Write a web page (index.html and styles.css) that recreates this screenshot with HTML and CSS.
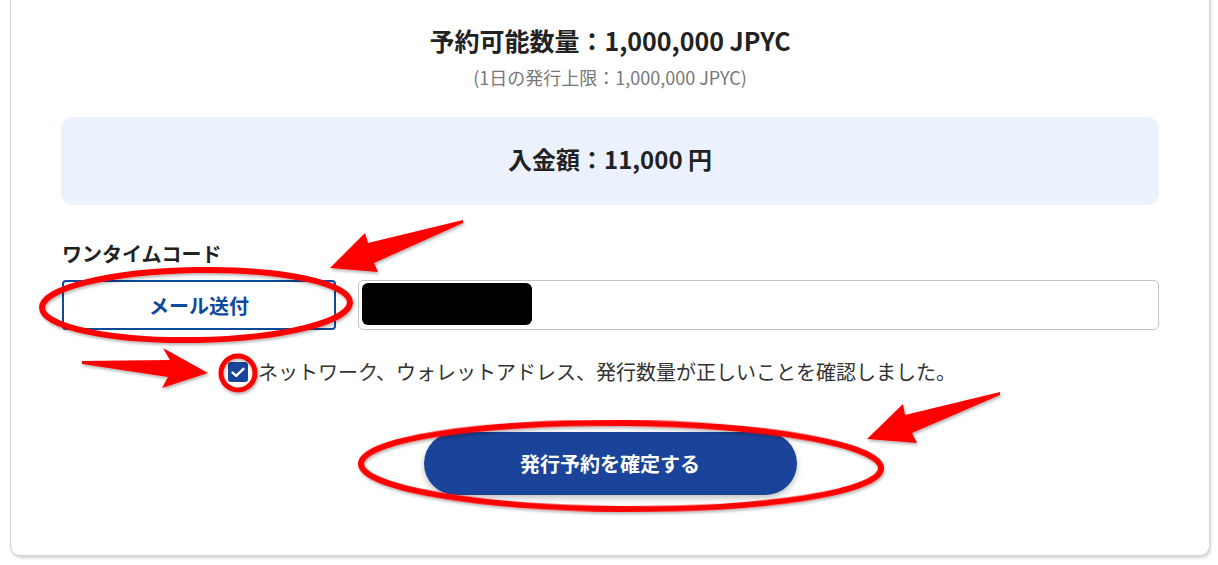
FILE: index.html
```html
<!DOCTYPE html>
<html lang="ja">
<head>
    <meta charset="UTF-8">
    <meta name="viewport" content="width=device-width, initial-scale=1.0">
    <title>発行予約</title>
    <link rel="stylesheet" href="styles.css">
</head>
<body>
    <div class="card">
        <h2 class="limit">予約可能数量：1,000,000 JPYC</h2>
        <p class="limit-note">(1日の発行上限：1,000,000 JPYC)</p>

        <div class="deposit">入金額：11,000 円</div>

        <form id="reserveForm">
            <label class="field-label" for="otp">ワンタイムコード</label>
            <div class="otp-row">
                <button type="button" class="send-btn">メール送付</button>
                <div class="otp-field">
                    <input type="text" id="otp" name="otp">
                    <span class="redact"></span>
                </div>
            </div>

            <label class="confirm">
                <span class="check">
                    <svg width="14" height="11" viewBox="0 0 14 11"><path d="M1.6 5.6 L5.2 8.9 L12.4 1.8" fill="none" stroke="#fff" stroke-width="2.4" stroke-linecap="round" stroke-linejoin="round"/></svg>
                </span>
                ネットワーク、ウォレットアドレス、発行数量が正しいことを確認しました。
            </label>

            <div class="submit-wrap">
                <button type="submit" class="submit-btn">発行予約を確定する</button>
            </div>
        </form>
    </div>

    <!-- red annotations drawn on top of the screenshot -->
    <svg class="marks" width="1218" height="565" viewBox="0 0 1218 565">
        <defs>
            <filter id="shade" x="-10%" y="-10%" width="130%" height="140%">
                <feDropShadow dx="1" dy="2" stdDeviation="1.5" flood-color="#000" flood-opacity="0.3"/>
            </filter>
        </defs>
        <g fill="#ff0000" filter="url(#shade)">
            <polygon points="463,220 368,243 365,233 330,268 378,272 374,263 463,223"/>
            <polygon points="82,361 170,360 163,348 208,373 162,388 168,377 82,364"/>
            <polygon points="1000,392 905,415 903,404 867,439 917,443 912,433 1000,395"/>
        </g>
        <g fill="none" stroke="#ff0000" filter="url(#shade)">
            <ellipse cx="196" cy="305" rx="154" ry="35" stroke-width="6" transform="rotate(-1 196 305)"/>
            <circle cx="238" cy="373" r="17" stroke-width="5"/>
            <ellipse cx="621" cy="466" rx="260" ry="43" stroke-width="6" transform="rotate(0.5 621 466)"/>
        </g>
    </svg>
</body>
</html>
```

FILE: styles.css
```css
body {
    font-family: "Noto Sans CJK JP", "Noto Sans", sans-serif;
    margin: 0;
    padding: 0 8px 0 10px;
    background: #fff;
    color: #222;
    position: relative;
    height: 565px;
    overflow: hidden;
}

.card {
    width: 1200px;
    box-sizing: border-box;
    margin-top: -20px;
    padding: 41px 50px 0 50px;
    height: 576px;
    border: 1px solid #d6d6d6;
    border-radius: 10px;
    box-shadow: 1px 2px 3px rgba(0, 0, 0, 0.18);
    background: #fff;
}

.limit {
    margin: 0;
    text-align: center;
    font-size: 25px;
    line-height: 36px;
    font-weight: 700;
    color: #222;
}

.limit-note {
    margin: 7px 0 0;
    text-align: center;
    font-size: 18px;
    line-height: 24px;
    color: #777;
}

.deposit {
    margin-top: 28px;
    height: 88px;
    box-sizing: border-box;
    padding-bottom: 5px;
    display: flex;
    justify-content: center;
    align-items: center;
    background: #ebf2fe;
    border-radius: 12px;
    font-size: 24px;
    font-weight: 700;
    color: #222;
}

.field-label {
    display: block;
    margin-top: 37px;
    margin-left: 1px;
    font-size: 20px;
    line-height: 24px;
    font-weight: 700;
    color: #222;
}

.otp-row {
    display: flex;
    gap: 22px;
    margin-top: 14px;
    height: 50px;
}

.send-btn {
    width: 274px;
    margin-left: 1px;
    background: #fff;
    border: 2px solid #0d4a9b;
    border-radius: 4px;
    color: #0d4a9b;
    font-family: inherit;
    font-size: 20px;
    font-weight: 700;
    cursor: pointer;
}

.otp-field {
    flex: 1;
    position: relative;
}

.otp-field input {
    width: 100%;
    height: 100%;
    box-sizing: border-box;
    border: 1px solid #c4c4c4;
    border-radius: 5px;
    padding: 0 12px;
    font-size: 18px;
}

.redact {
    position: absolute;
    left: 4px;
    top: 3px;
    width: 170px;
    height: 42px;
    background: #000;
    border-radius: 6px;
}

.confirm {
    display: flex;
    align-items: center;
    justify-content: center;
    gap: 10px;
    margin-top: 28px;
    padding-right: 36px;
    font-size: 20px;
    line-height: 28px;
    color: #333;
    cursor: pointer;
}

.check {
    width: 20px;
    height: 20px;
    border-radius: 3px;
    background: #1a4399;
    display: flex;
    justify-content: center;
    align-items: center;
}

.submit-wrap {
    display: flex;
    justify-content: center;
    margin-top: 46px;
}

.submit-btn {
    width: 373px;
    height: 63px;
    border: none;
    border-radius: 32px;
    background: #1a4399;
    color: #fff;
    font-family: inherit;
    font-size: 20px;
    font-weight: 700;
    box-shadow: 0 3px 6px rgba(0, 0, 0, 0.25);
    cursor: pointer;
}

.marks {
    position: absolute;
    top: 0;
    left: 0;
    pointer-events: none;
}
```
